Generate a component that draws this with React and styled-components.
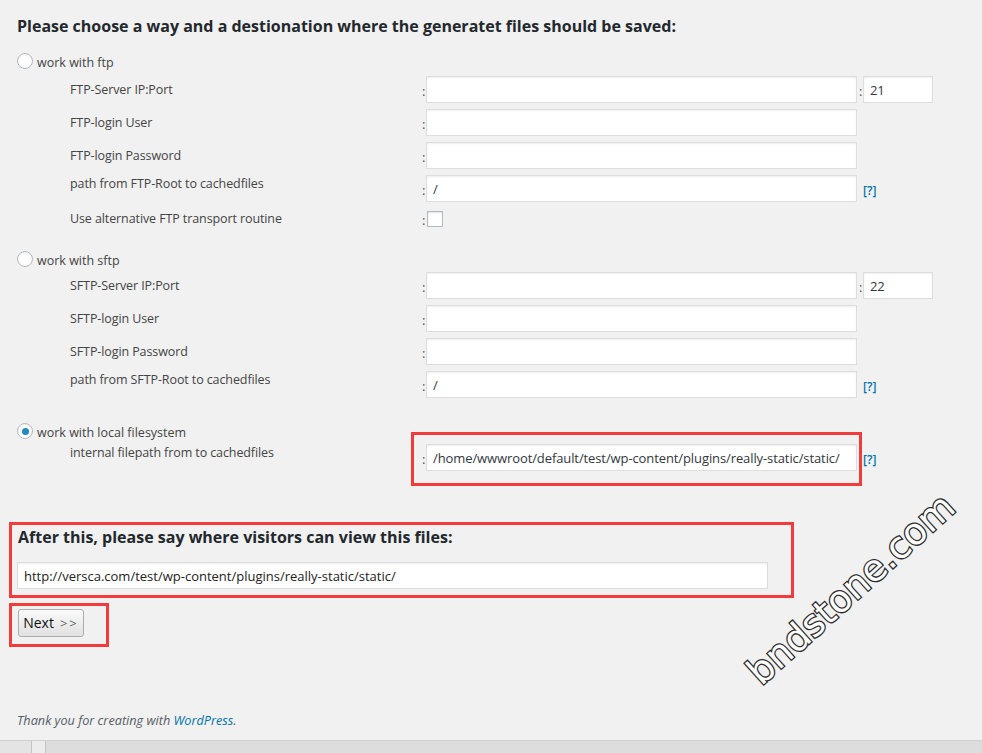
import React from 'react';
import styled, { createGlobalStyle } from 'styled-components';

const GlobalStyle = createGlobalStyle`
    html, body {
        margin: 0;
        background: #f1f1f1;
    }
    body {
        font-family: "Open Sans", "Noto Sans", sans-serif;
        font-size: 13px;
        color: #444;
    }
`;

const Page = styled.div`
    position: relative;
    height: 753px;
    overflow: hidden;
    padding: 0 0 0 17px;
    box-sizing: border-box;
`;

const Title = styled.h2`
    margin: 0;
    padding-top: 15px;
    font-size: 16px;
    line-height: 22px;
    font-weight: 700;
    color: #23282d;
`;

const Method = styled.div`
    margin-top: ${(p) => p.$gap}px;
`;

const RadioLine = styled.label`
    display: flex;
    align-items: center;
    gap: 4px;
    height: 16px;
    line-height: 18px;
    font-size: 12.5px;
    color: #444;
    span:last-child {
        margin-top: 4px;
    }
`;

const Radio = styled.i`
    width: 16px;
    height: 16px;
    box-sizing: border-box;
    border-radius: 50%;
    border: 1px solid #b4b9be;
    background: #fff;
    box-shadow: inset 0 1px 2px rgba(0, 0, 0, 0.07);
    display: flex;
    align-items: center;
    justify-content: center;
    &::after {
        content: '';
        display: ${(p) => (p.$checked ? 'block' : 'none')};
        width: 7px;
        height: 7px;
        border-radius: 50%;
        background: #1e8cbe;
    }
`;

const Fields = styled.div`
    display: flex;
    flex-direction: column;
    gap: 6px;
    margin-top: ${(p) => p.$top}px;
    padding-left: 53px;
`;

const Row = styled.div`
    display: flex;
    align-items: center;
`;

const Label = styled.div`
    width: 352px;
    flex: none;
    line-height: 18px;
    font-size: 12.5px;
    letter-spacing: -0.1px;
    align-self: ${(p) => (p.$top ? 'flex-start' : 'center')};
`;

const Colon = styled.span`
    width: 4px;
    flex: none;
    line-height: 18px;
    margin-top: 3px;
    color: #555;
`;

const Cell = styled.div`
    position: relative;
    display: flex;
    align-items: center;
    &::after {
        content: '';
        position: absolute;
        left: -11px;
        right: -5px;
        top: -12px;
        bottom: -15px;
        border: 3px solid #f23b3b;
        pointer-events: none;
    }
`;

const TextInput = styled.input`
    width: ${(p) => p.$w || 431}px;
    height: 27px;
    box-sizing: border-box;
    margin: 0;
    padding: 0 6px;
    border: 1px solid #ddd;
    background: #fff;
    box-shadow: inset 0 1px 2px rgba(0, 0, 0, 0.07);
    font-family: "Open Sans", "Noto Sans", sans-serif;
    font-size: 13px;
    letter-spacing: -0.1px;
    color: #32373c;
    outline: none;
`;

const Check = styled.span`
    display: block;
    width: 16px;
    height: 16px;
    box-sizing: border-box;
    margin-left: 1px;
    border: 1px solid #b4b9be;
    background: #fff;
    box-shadow: inset 0 1px 2px rgba(0, 0, 0, 0.1);
`;

const Help = styled.a`
    margin-left: 6px;
    margin-top: 3px;
    color: #0073aa;
    text-decoration: none;
    font-size: 12px;
    font-weight: 600;
`;

const Annotated = styled.div`
    width: 785px;
    margin: 51px 0 0 -8px;
    padding: 2px 16px 6px 5px;
    border: 3px solid #f23b3b;
    box-sizing: border-box;
`;

const SubTitle = styled.h3`
    margin: 0 0 15px 1px;
    font-size: 16px;
    line-height: 20px;
    font-weight: 700;
    color: #23282d;
    font-stretch: 90%;
`;

const UrlInput = styled(TextInput)`
    width: 751px;
    letter-spacing: 0;
    color: #222;
`;

const ButtonBox = styled.div`
    width: 100px;
    height: 44px;
    margin: 5px 0 0 -8px;
    padding: 3px 0 0 6px;
    border: 3px solid #f23b3b;
    box-sizing: border-box;
`;

const Button = styled.button`
    display: flex;
    align-items: center;
    justify-content: center;
    gap: 6px;
    width: 66px;
    height: 28px;
    margin: 0;
    padding: 0 0 1px;
    border: 1px solid #adadad;
    border-radius: 3px;
    background: linear-gradient(#fafafa, #e1e1e1);
    font-family: "Open Sans", "Noto Sans", sans-serif;
    font-size: 14px;
    color: #111;
`;

const Arrows = styled.span`
    color: #666;
    letter-spacing: 2px;
    font-size: 13px;
`;

const Footer = styled.p`
    margin: 64px 0 0;
    font-style: italic;
    font-size: 12.7px;
    color: #555d66;
    a {
        color: #0073aa;
        text-decoration: none;
    }
`;

const BottomBar = styled.div`
    position: absolute;
    left: 0;
    right: 0;
    bottom: 0;
    height: 12px;
    background: #ddd;
    border-top: 1px solid #d0d0d0;
    display: flex;
`;

const Tab = styled.span`
    width: ${(p) => p.$w}px;
    border-right: 1px solid #c4c4c4;
    background: ${(p) => p.$bg};
`;

const Watermark = styled.span`
    position: absolute;
    left: 851px;
    top: 589px;
    transform: translate(-50%, -50%) rotate(-42deg);
    font-family: "DejaVu Sans", sans-serif;
    font-size: 37px;
    color: #fff;
    -webkit-text-stroke: 2.6px #2a2a2a;
    paint-order: stroke fill;
    white-space: nowrap;
    pointer-events: none;
`;

const ftp = [
    { label: 'FTP-Server IP:Port', port: '21' },
    { label: 'FTP-login User' },
    { label: 'FTP-login Password' },
    { label: 'path from FTP-Root to cachedfiles', value: '/', help: true, top: true },
];

const sftp = [
    { label: 'SFTP-Server IP:Port', port: '22' },
    { label: 'SFTP-login User' },
    { label: 'SFTP-login Password' },
    { label: 'path from SFTP-Root to cachedfiles', value: '/', help: true, top: true },
];

function FieldRow({ field }) {
    return (
        <Row>
            <Label $top={field.top}>{field.label}</Label>
            <Colon>:</Colon>
            <TextInput defaultValue={field.value || ''} />
            {field.port && (
                <>
                    <Colon style={{ marginLeft: 2 }}>:</Colon>
                    <TextInput $w={70} defaultValue={field.port} />
                </>
            )}
            {field.help && <Help href="#">[?]</Help>}
        </Row>
    );
}

function App() {
    return (
        <Page>
            <GlobalStyle />
            <Title>Please choose a way and a destionation where the generatet files should be saved:</Title>

            <Method $gap={16}>
                <RadioLine><Radio /><span>work with ftp</span></RadioLine>
                <Fields $top={7}>
                    {ftp.map((f) => <FieldRow key={f.label} field={f} />)}
                    <Row>
                        <Label>Use alternative FTP transport routine</Label>
                        <Colon>:</Colon>
                        <Check />
                    </Row>
                </Fields>
            </Method>

            <Method $gap={22}>
                <RadioLine><Radio /><span>work with sftp</span></RadioLine>
                <Fields $top={5}>
                    {sftp.map((f) => <FieldRow key={f.label} field={f} />)}
                </Fields>
            </Method>

            <Method $gap={25}>
                <RadioLine><Radio $checked /><span>work with local filesystem</span></RadioLine>
                <Fields $top={5}>
                    <Row>
                        <Label $top>internal filepath from to cachedfiles</Label>
                        <Cell>
                            <Colon>:</Colon>
                            <TextInput defaultValue="/home/wwwroot/default/test/wp-content/plugins/really-static/static/" />
                        </Cell>
                        <Help href="#">[?]</Help>
                    </Row>
                </Fields>
            </Method>

            <Annotated>
                <SubTitle>After this, please say where visitors can view this files:</SubTitle>
                <UrlInput defaultValue="http://versca.com/test/wp-content/plugins/really-static/static/" />
            </Annotated>

            <ButtonBox>
                <Button>Next<Arrows>&gt;&gt;</Arrows></Button>
            </ButtonBox>

            <Footer>
                Thank you for creating with <a href="#">WordPress</a>.
            </Footer>

            <BottomBar>
                <Tab $w={31} $bg="#e4e4e4" />
                <Tab $w={13} $bg="#ececec" />
            </BottomBar>

            <Watermark>bndstone.com</Watermark>
        </Page>
    );
}

export default App;
